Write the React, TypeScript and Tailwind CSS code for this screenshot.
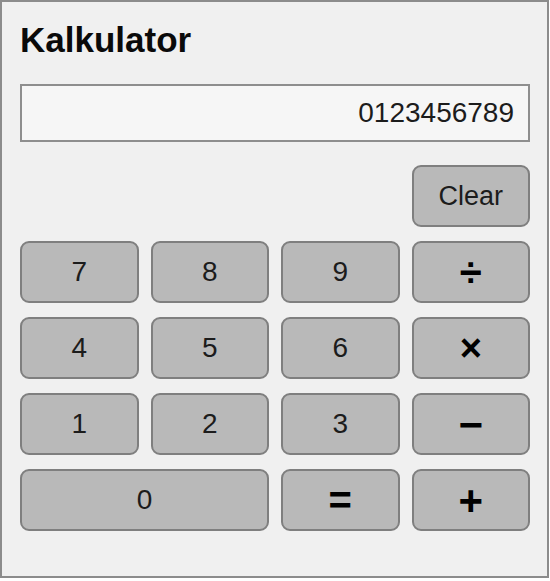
import React, { useState } from 'react';

const btn =
  'h-[62px] rounded-[9px] border-2 border-[#7f7f7f] bg-[#b9b9b9] text-[#1c1c1c] flex items-center justify-center';

export default function App() {
  const [display, setDisplay] = useState('0123456789');

  const press = (k: string) => {
    if (k === 'C') return setDisplay('');
    setDisplay((d) => d + k);
  };

  return (
    <div
      className="w-[549px] h-[578px] border-2 border-[#8c8c8c] bg-[#f0f0f0] pl-[18px] pr-[17px] pt-[20px]"
      style={{ fontFamily: '"Liberation Sans", Arial, sans-serif' }}
    >
      <h1 className="text-[35px] leading-[35px] font-bold text-[#0a0a0a]">Kalkulator</h1>

      {/* Display */}
      <div className="mt-[27px] h-[58px] border-2 border-[#8e8e8e] bg-[#f6f6f6] flex items-center justify-end pr-[14px] text-[28px] text-[#1c1c1c]">
        {display}
      </div>

      {/* Keypad */}
      <div className="mt-[23px] grid grid-cols-4 gap-x-[12px] gap-y-[14px]">
        <button onClick={() => press('C')} className={`${btn} col-start-4 text-[27px]`}>
          Clear
        </button>

        <button onClick={() => press('7')} className={`${btn} text-[28px]`}>7</button>
        <button onClick={() => press('8')} className={`${btn} text-[28px]`}>8</button>
        <button onClick={() => press('9')} className={`${btn} text-[28px]`}>9</button>
        <button onClick={() => press('/')} className={`${btn} text-[40px] font-bold text-black`}>÷</button>

        <button onClick={() => press('4')} className={`${btn} text-[28px]`}>4</button>
        <button onClick={() => press('5')} className={`${btn} text-[28px]`}>5</button>
        <button onClick={() => press('6')} className={`${btn} text-[28px]`}>6</button>
        <button onClick={() => press('*')} className={`${btn} text-[38px] font-bold text-black`}>×</button>

        <button onClick={() => press('1')} className={`${btn} text-[28px]`}>1</button>
        <button onClick={() => press('2')} className={`${btn} text-[28px]`}>2</button>
        <button onClick={() => press('3')} className={`${btn} text-[28px]`}>3</button>
        <button onClick={() => press('-')} className={`${btn} text-[42px] font-bold text-black`}>−</button>

        <button onClick={() => press('0')} className={`${btn} col-span-2 text-[28px]`}>0</button>
        <button onClick={() => press('=')} className={`${btn} text-[40px] font-bold text-black`}>=</button>
        <button onClick={() => press('+')} className={`${btn} text-[42px] font-bold text-black`}>+</button>
      </div>
    </div>
  );
}
